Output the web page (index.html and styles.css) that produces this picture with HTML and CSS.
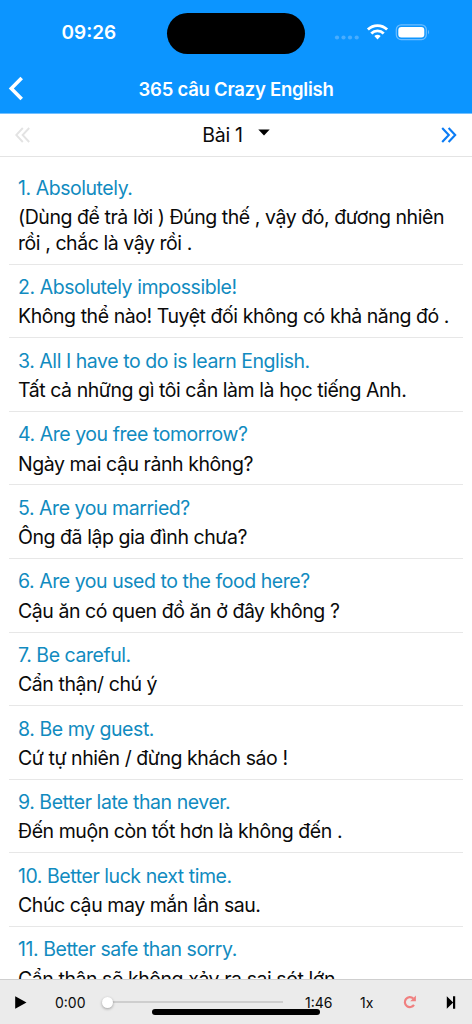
FILE: index.html
```html
<!DOCTYPE html>
<html lang="vi">
<head>
<meta charset="utf-8">
<title>365 câu Crazy English</title>
<link rel="stylesheet" href="styles.css">
</head>
<body>
<div class="app">
  <header class="header">
    <div class="status">
      <div class="clock"><span>09:26</span></div>
      <div class="island"></div>
      <div class="indicators">
        <svg width="98" height="22" viewBox="0 0 98 22">
          <g fill="#49adff"><circle cx="4" cy="15.5" r="2.1"/><circle cx="10.5" cy="15.5" r="2.1"/><circle cx="17" cy="15.5" r="2.1"/><circle cx="23.7" cy="15.5" r="2.1"/></g>
          <g fill="none" stroke="#fff" stroke-width="2.8"><path d="M34.9 7.600a13.700 13.700 0 0 1 19.200 0"/><path d="M38.300 11.500a8.700 8.700 0 0 1 12.400 0"/></g>
          <path d="M41.300 14.100a4.800 4.800 0 0 1 6.400 0L44.500 17.500Z" fill="#fff"/>
          <rect x="63.3" y="2.8" width="30" height="14.8" rx="4.8" fill="none" stroke="#6dbdff" stroke-width="1.2"/>
          <rect x="65.3" y="4.9" width="26" height="10.6" rx="3" fill="#fff"/>
          <path d="M95 7.800q2.200 2.400 0 4.800z" fill="#6dbdff"/>
        </svg>
      </div>
    </div>
    <div class="navbar">
      <svg class="back" width="24" height="28" viewBox="0 0 24 28"><path d="M21.700 3 11.300 13.500l10.400 10.500" fill="none" stroke="#fff" stroke-width="3.600"/></svg>
      <h1 class="title">365 câu Crazy English</h1>
    </div>
  </header>
  <nav class="lessons">
    <svg width="16" height="16" viewBox="0 0 16 16"><path d="M7.800 1 1.200 8l6.600 7M14.200 1 7.600 8l6.600 7" fill="none" stroke="#e3e3e3" stroke-width="1.900"/></svg>
    <div class="picker"><span>Bài 1</span><svg width="12" height="7" viewBox="0 0 12 7"><path d="M.3.500h11.400L6 6.500Z"/></svg></div>
    <svg width="16" height="16" viewBox="0 0 16 16"><path d="M1.200 1 7.800 8l-6.600 7M7.600 1l6.600 7-6.600 7" fill="none" stroke="#0b7cf5" stroke-width="2.100"/></svg>
  </nav>
  <main class="list">
    <article class="item"><p class="en">1. Absolutely.</p><p class="vi">(Dùng để trả lời ) Đúng thế , vậy đó, đương nhiên<br>rồi , chắc là vậy rồi .</p></article>
    <article class="item"><p class="en">2. Absolutely impossible!</p><p class="vi">Không thể nào! Tuyệt đối không có khả năng đó .</p></article>
    <article class="item"><p class="en">3. All I have to do is learn English.</p><p class="vi">Tất cả những gì tôi cần làm là học tiếng Anh.</p></article>
    <article class="item"><p class="en">4. Are you free tomorrow?</p><p class="vi">Ngày mai cậu rảnh không?</p></article>
    <article class="item"><p class="en">5. Are you married?</p><p class="vi">Ông đã lập gia đình chưa?</p></article>
    <article class="item"><p class="en">6. Are you used to the food here?</p><p class="vi">Cậu ăn có quen đồ ăn ở đây không ?</p></article>
    <article class="item"><p class="en">7. Be careful.</p><p class="vi">Cẩn thận/ chú ý</p></article>
    <article class="item"><p class="en">8. Be my guest.</p><p class="vi">Cứ tự nhiên / đừng khách sáo !</p></article>
    <article class="item"><p class="en">9. Better late than never.</p><p class="vi">Đến muộn còn tốt hơn là không đến .</p></article>
    <article class="item"><p class="en">10. Better luck next time.</p><p class="vi">Chúc cậu may mắn lần sau.</p></article>
    <article class="item"><p class="en">11. Better safe than sorry.</p><p class="vi">Cẩn thận sẽ không xảy ra sai sót lớn</p></article>
  </main>
  <footer class="player">
    <svg class="play" width="12" height="13" viewBox="0 0 12 13"><path d="M.2.300v12.400L11.500 6.500Z"/></svg>
    <span class="elapsed">0:00</span>
    <div class="track"><div class="thumb"></div></div>
    <span class="total">1:46</span>
    <span class="speed">1x</span>
    <svg class="repeat" width="14" height="14" viewBox="0 0 14 14"><path d="M10.200 3.400A5 5 0 1 0 11 9.900" fill="none" stroke="#f08080" stroke-width="2.200"/><path d="M12.900.600v5.700H7.200Z" fill="#f08080"/></svg>
    <svg class="next" width="10" height="13" viewBox="0 0 10 13"><path d="M.8.300v12.400L7.200 6.500ZM7 .300h2.200v12.400H7Z"/></svg>
    <div class="home-bar"></div>
  </footer>
</div>
</body>
</html>
```
FILE: styles.css
```css
* { box-sizing: border-box; }
body { margin: 0; background: #fff; color: #0a0a0a; font-family: Inter, "Noto Sans", sans-serif; }
h1, p { margin: 0; font-weight: 400; }
svg { display: block; flex: none; }
.app { height: 1024px; display: flex; flex-direction: column; overflow: hidden; }
.header { flex: none; height: 114px; background: #0c95ff; border-bottom: 1px solid #73c0ff; }
.status { height: 65px; display: grid; grid-template-columns: 167px 138px 1fr; align-items: center; }
.clock { padding-left: 61.5px; color: #fff; font-size: 19px; font-weight: 600; }
.island { height: 41px; margin-top: 1px; border-radius: 21px; background: #000; }
.indicators { padding-left: 28px; }
.navbar { height: 48px; display: grid; grid-template-columns: 24px 1fr 24px; align-items: center; }
.title { text-align: center; color: #fff; font-size: 18.5px; font-weight: 600; letter-spacing: -0.25px; }
.lessons { flex: none; height: 43px; padding: 0 15px; display: flex; align-items: center; justify-content: space-between; border-bottom: 1px solid #e4e4e4; }
.picker { display: flex; align-items: center; gap: 15px; font-size: 19.5px; letter-spacing: -0.3px; }
.picker svg { margin-top: -5px; }
.list { flex: 1; min-height: 0; overflow: hidden; padding: 8.5px 9px 0; }
.item { padding: 10.5px 0 7.3px 9px; border-bottom: 1px solid #e7e7e7; font-size: 19.5px; line-height: 25.6px; white-space: nowrap; }
.en { margin-bottom: 3.6px; color: #118bc0; letter-spacing: -0.45px; }
.vi { letter-spacing: -0.44px; }
.player { position: relative; flex: none; height: 45px; padding: 0 16px 0 15px; display: flex; align-items: center; background: #ebebeb; border-top: 1px solid #cfcfcf; font-size: 14px; }
.elapsed { width: 35px; margin-left: 28px; }
.track { width: 181px; height: 2px; margin-left: 12px; background: #cecece; }
.thumb { width: 11px; height: 11px; margin-top: -4.5px; border-radius: 50%; background: #fff; box-shadow: 0 1px 3px #0005; }
.total { width: 36px; margin-left: 22px; }
.speed { width: 20px; margin-left: 19px; }
.repeat { margin-left: 23px; }
.next { margin-left: auto; }
.home-bar { position: absolute; left: 152px; bottom: 9px; width: 168px; height: 6px; border-radius: 3px; background: #000; }
```
